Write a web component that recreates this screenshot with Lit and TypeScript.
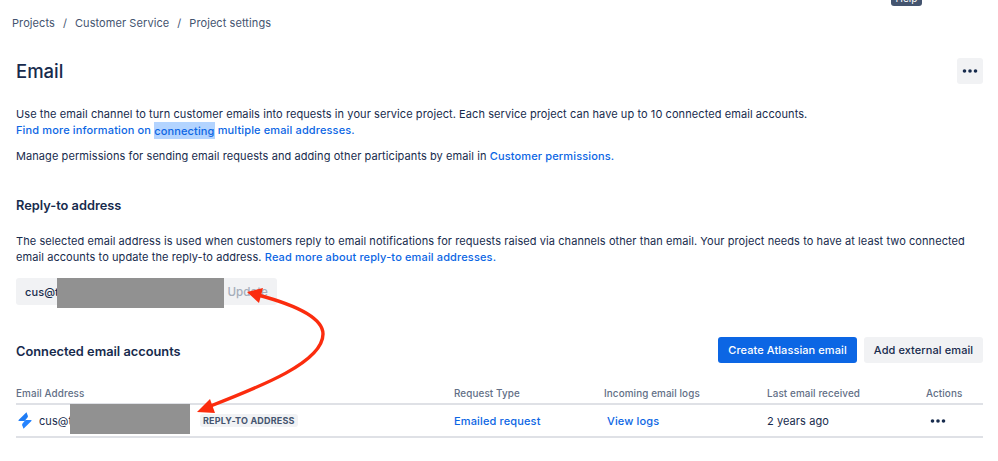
import { LitElement, html, css, svg } from "lit";
import { customElement } from "lit/decorators.js";

@customElement("app-root")
export class AppRoot extends LitElement {
  static styles = css`
    :host { display: block; position: relative; width: 998px; height: 461px; overflow: hidden; background: #fff;
      font-family: Inter, "Liberation Sans", sans-serif; font-size: 11px; line-height: 16px; color: #172b4d; letter-spacing: 0.08px; }
    a { color: #0c66e4; text-decoration: none; font-weight: 500; letter-spacing: 0.14px; }
    .page { display: flex; flex-direction: column; padding: 15px 15px 0 16px; }
    .crumbs { display: flex; gap: 8px; margin-left: -4px; color: #44546f; height: 16px; }
    .titlebar { display: flex; justify-content: space-between; align-items: center; margin-top: 27px; height: 26px; }
    h1 { font-size: 18.5px; line-height: 26px; font-weight: 500; margin: 0; letter-spacing: 0; }
    .more { width: 26px; height: 26px; border-radius: 3px; background: #f1f2f4; display: flex; align-items: center; justify-content: center; }
    .p1 { margin: 22px 0 0; }
    .p2 { margin: 10px 0 0; }
    mark { background: #b3d4ff; color: inherit; padding: 1.5px 0; }
    h2 { font-size: 12.8px; line-height: 18px; font-weight: 600; margin: 33px 0 0; letter-spacing: 0; }
    .p3 { margin: 18px 0 0; }
    .select { display: flex; justify-content: space-between; align-items: center; box-sizing: border-box; width: 261px; height: 27px; margin-top: 13px;
      background: #f1f2f4; border-radius: 3px; padding: 0 9px 0 8px; }
    .select span:first-child { padding-left: 1px; font-weight: 500; }
    .update { color: #a5adba; font-weight: 500; font-size: 11.6px; }
    .conn { display: flex; justify-content: space-between; align-items: center; margin-top: 32px; height: 26px; }
    .conn h2 { margin: 4px 0 0; }
    .btns { display: flex; gap: 7px; }
    .btn { height: 26px; box-sizing: border-box; border-radius: 3px; display: flex; align-items: center; justify-content: center; font-weight: 500; }
    .primary { width: 139px; background: #0c66e4; color: #fff; }
    .secondary { width: 119px; background: #f1f2f4; color: #172b4d; }
    .grid { display: grid; grid-template-columns: 438px 150px 163px 159px 1fr; margin-top: 23px; }
    .head { font-size: 9.9px; font-weight: 500; color: #626f86; height: 17px; line-height: 14px; border-bottom: 2px solid #dfe1e6; letter-spacing: 0.1px; }
    .cell { height: 31px; border-bottom: 2px solid #dfe1e6; display: flex; align-items: center; }
    .email { gap: 7px; padding-left: 2px; }
    .addr { width: 154px; }
    .badge { background: #f1f2f4; color: #44546f; font-size: 9px; font-weight: 700; line-height: 13px; padding: 0 3px; border-radius: 3px; letter-spacing: 0.02em; }
    .logs { padding-left: 3px; }
    .dots { padding-left: 4px; }
    .tooltip { position: absolute; left: 891px; top: -10px; width: 31px; height: 16px; background: #44546f; border-radius: 3px; color: #fff; font-size: 10px; line-height: 16px; text-align: center; }
    .redact { position: absolute; background: #919191; }
    .r1 { left: 57px; top: 278px; width: 167px; height: 30px; }
    .r2 { left: 70px; top: 404px; width: 120px; height: 30px; }
    .overlay { position: absolute; left: 0; top: 0; pointer-events: none; }
  `;

  private dots(size = 3.6) {
    return html`<svg width="16" height="6" viewBox="0 0 16 6" aria-hidden="true">
      <circle cx="2.5" cy="3" r="${size / 2}" fill="#172b4d"></circle>
      <circle cx="8" cy="3" r="${size / 2}" fill="#172b4d"></circle>
      <circle cx="13.5" cy="3" r="${size / 2}" fill="#172b4d"></circle>
    </svg>`;
  }

  render() {
    return html`
      <div class="page">
        <nav class="crumbs"><span>Projects</span><span>/</span><span>Customer Service</span><span>/</span><span>Project settings</span></nav>
        <div class="titlebar"><h1>Email</h1><div class="more">${this.dots()}</div></div>
        <p class="p1">Use the email channel to turn customer emails into requests in your service project. Each service project can have up to 10 connected email accounts.<br />
          <a href="#">Find more information on <mark>connecting</mark> multiple email addresses.</a></p>
        <p class="p2">Manage permissions for sending email requests and adding other participants by email in <a href="#">Customer permissions.</a></p>
        <h2>Reply-to address</h2>
        <p class="p3">The selected email address is used when customers reply to email notifications for requests raised via channels other than email. Your project needs to have at least two connected email accounts to update the reply-to address. <a href="#">Read more about reply-to email addresses.</a></p>
        <div class="select"><span>cus@t</span><span class="update">Update</span></div>
        <div class="conn"><h2>Connected email accounts</h2>
          <div class="btns"><div class="btn primary">Create Atlassian email</div><div class="btn secondary">Add external email</div></div></div>
        <div class="grid">
          <div class="head">Email Address</div><div class="head">Request Type</div><div class="head">Incoming email logs</div><div class="head">Last email received</div><div class="head">Actions</div>
          <div class="cell email">
            <svg width="14" height="17" viewBox="0 0 14 17" aria-hidden="true">
              <path d="M8.5 0.3 L0.6 8 Q0 9 1 9 L6.5 9 L9.5 5.5 Q10.5 4 9.5 3 Z" fill="#1f7cf5"></path>
              <path d="M5.5 16.7 L13.4 9 Q14 8 13 8 L7.5 8 L4.5 11.5 Q3.5 13 4.5 14 Z" fill="#2684ff"></path>
            </svg>
            <span class="addr">cus@t</span><span class="badge">REPLY-TO ADDRESS</span>
          </div>
          <div class="cell"><a href="#">Emailed request</a></div>
          <div class="cell logs"><a href="#">View logs</a></div>
          <div class="cell">2 years ago</div>
          <div class="cell dots">${this.dots()}</div>
        </div>
      </div>
      <div class="tooltip">Help</div>
      <div class="redact r1"></div>
      <div class="redact r2"></div>
      <svg class="overlay" width="998" height="461" viewBox="0 0 998 461" aria-hidden="true">
        ${svg`<path d="M258 295 C 288 303, 323 316, 323 334 C 323 362, 262 386, 208 407" fill="none" stroke="#fb2c0e" stroke-width="3.4" stroke-linecap="round"></path>
        <path d="M247 292 L263 288 L259 303 Z" fill="#fb2c0e"></path>
        <path d="M197 412 L210 399 L215 413 Z" fill="#fb2c0e"></path>`}
      </svg>
    `;
  }
}
